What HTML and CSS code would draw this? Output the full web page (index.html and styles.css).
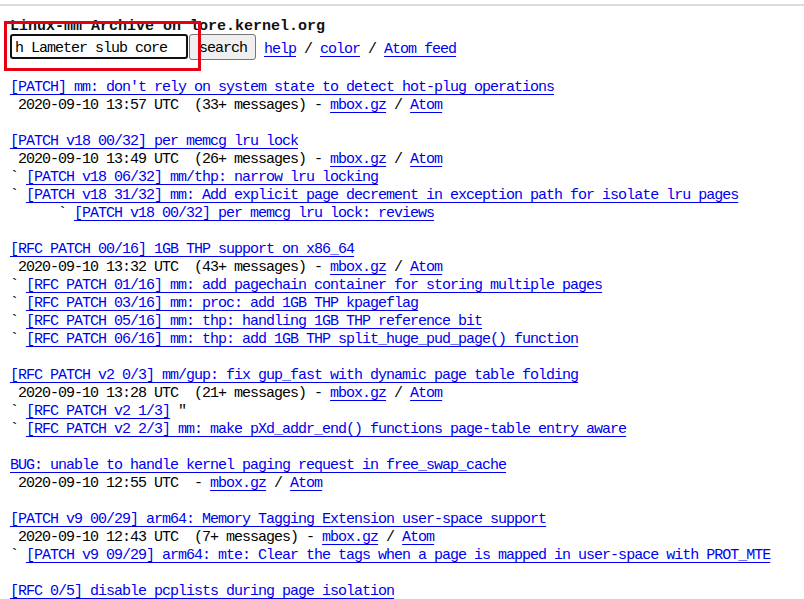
FILE: index.html
```html
<!DOCTYPE html>
<html>
<head>
<meta charset="utf-8">
<title>Linux-mm Archive on lore.kernel.org</title>
<link rel="stylesheet" href="styles.css">
</head>
<body>
<div class="topline"></div>
<form class="head">
<div class="title">Linux-mm Archive on lore.kernel.org</div>
<div class="searchrow"><input class="q" type="text" value="h Lameter slub core"><button class="btn" type="button">search</button><span class="links"> <a href="#">help</a> / <a href="#">color</a> / <a href="#">Atom feed</a></span></div>
</form>
<pre class="list"><a href="#">[PATCH] mm: don't rely on system state to detect hot-plug operations</a>
 2020-09-10 13:57 UTC  (33+ messages) - <a href="#">mbox.gz</a> / <a href="#">Atom</a>

<a href="#">[PATCH v18 00/32] per memcg lru lock</a>
 2020-09-10 13:49 UTC  (26+ messages) - <a href="#">mbox.gz</a> / <a href="#">Atom</a>
` <a href="#">[PATCH v18 06/32] mm/thp: narrow lru locking</a>
` <a href="#">[PATCH v18 31/32] mm: Add explicit page decrement in exception path for isolate lru pages</a>
      ` <a href="#">[PATCH v18 00/32] per memcg lru lock: reviews</a>

<a href="#">[RFC PATCH 00/16] 1GB THP support on x86_64</a>
 2020-09-10 13:32 UTC  (43+ messages) - <a href="#">mbox.gz</a> / <a href="#">Atom</a>
` <a href="#">[RFC PATCH 01/16] mm: add pagechain container for storing multiple pages</a>
` <a href="#">[RFC PATCH 03/16] mm: proc: add 1GB THP kpageflag</a>
` <a href="#">[RFC PATCH 05/16] mm: thp: handling 1GB THP reference bit</a>
` <a href="#">[RFC PATCH 06/16] mm: thp: add 1GB THP split_huge_pud_page() function</a>

<a href="#">[RFC PATCH v2 0/3] mm/gup: fix gup_fast with dynamic page table folding</a>
 2020-09-10 13:28 UTC  (21+ messages) - <a href="#">mbox.gz</a> / <a href="#">Atom</a>
` <a href="#">[RFC PATCH v2 1/3]</a> ″
` <a href="#">[RFC PATCH v2 2/3] mm: make pXd_addr_end() functions page-table entry aware</a>

<a href="#">BUG: unable to handle kernel paging request in free_swap_cache</a>
 2020-09-10 12:55 UTC  - <a href="#">mbox.gz</a> / <a href="#">Atom</a>

<a href="#">[PATCH v9 00/29] arm64: Memory Tagging Extension user-space support</a>
 2020-09-10 12:43 UTC  (7+ messages) - <a href="#">mbox.gz</a> / <a href="#">Atom</a>
` <a href="#">[PATCH v9 09/29] arm64: mte: Clear the tags when a page is mapped in user-space with PROT_MTE</a>

<a href="#">[RFC 0/5] disable pcplists during page isolation</a>
</pre>
<div class="mark"></div>
</body>
</html>
```

FILE: styles.css
```css
html, body {
  background: #ffffff;
}
body {
  margin: 0;
  color: #000000;
  font-family: "Liberation Mono", "DejaVu Sans Mono", monospace;
  font-size: 15px;
  letter-spacing: -1px;
  line-height: 18px;
  position: relative;
  overflow: hidden;
}
a {
  color: #0000ee;
  text-decoration: underline;
  text-underline-offset: 3px;
  text-decoration-thickness: 1px;
}
.topline {
  margin-top: 4px;
  height: 2px;
  background: #dcdcdc;
}
.head {
  margin: 12px 0 0 0;
  padding-left: 10px;
}
.title {
  font-weight: bold;
  letter-spacing: 0;
  height: 16px;
  line-height: 18px;
  color: #111111;
}
.searchrow {
  display: flex;
  align-items: flex-start;
  height: 26px;
  white-space: pre;
}
.q {
  box-sizing: border-box;
  width: 178px;
  height: 25px;
  margin: 0;
  padding: 3px 0 0 3px;
  border: 2px solid #101010;
  border-radius: 3px;
  font-family: "Liberation Mono", "DejaVu Sans Mono", monospace;
  font-size: 15px;
  letter-spacing: -1px;
  color: #000000;
  background: #ffffff;
  outline: none;
}
.btn {
  box-sizing: border-box;
  width: 67px;
  height: 26px;
  margin: 0 0 0 1px;
  padding: 3px 0 0 9px;
  border: 1px solid #767676;
  border-radius: 3px;
  background: #efefef;
  font-family: "Liberation Mono", "DejaVu Sans Mono", monospace;
  font-size: 15px;
  letter-spacing: -1px;
  color: #000000;
  text-align: left;
}
.links {
  padding-top: 3px;
  line-height: 26px;
}
.list {
  margin: 19px 0 0 0;
  padding-left: 10px;
  font-family: inherit;
  font-size: inherit;
  line-height: 18px;
}
.mark {
  position: absolute;
  left: 4px;
  top: 21px;
  width: 197px;
  height: 50px;
  box-sizing: border-box;
  border: 3px solid #e50012;
}
```
